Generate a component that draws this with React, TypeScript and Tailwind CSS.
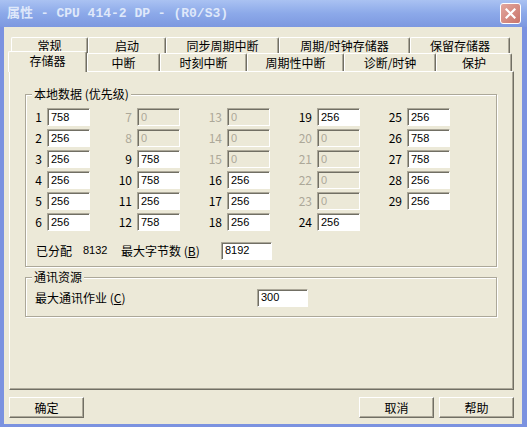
import React from "react";

type Cell = { n: number; v: string; off?: boolean } | null;

const cols: Cell[][] = [
  [{ n: 1, v: "758" }, { n: 2, v: "256" }, { n: 3, v: "256" }, { n: 4, v: "256" }, { n: 5, v: "256" }, { n: 6, v: "256" }],
  [{ n: 7, v: "0", off: true }, { n: 8, v: "0", off: true }, { n: 9, v: "758" }, { n: 10, v: "758" }, { n: 11, v: "256" }, { n: 12, v: "758" }],
  [{ n: 13, v: "0", off: true }, { n: 14, v: "0", off: true }, { n: 15, v: "0", off: true }, { n: 16, v: "256" }, { n: 17, v: "256" }, { n: 18, v: "256" }],
  [{ n: 19, v: "256" }, { n: 20, v: "0", off: true }, { n: 21, v: "0", off: true }, { n: 22, v: "0", off: true }, { n: 23, v: "0", off: true }, { n: 24, v: "256" }],
  [{ n: 25, v: "256" }, { n: 26, v: "758" }, { n: 27, v: "758" }, { n: 28, v: "256" }, { n: 29, v: "256" }, null],
];

const cjk = "font-['Noto_Sans_CJK_SC',sans-serif]";
const sunken =
  "border border-t-[#aca899] border-l-[#aca899] border-b-white border-r-white shadow-[inset_1px_1px_0_#716f64]";
const raised =
  "border border-t-white border-l-white border-r-[#716f64] border-b-[#716f64] shadow-[inset_-1px_-1px_0_#aca899]";
const etched = "border border-[#aca899] shadow-[inset_1px_1px_0_#fff,1px_1px_0_#fff]";

const Field = ({ value, off, w = "w-[43px]" }: { value: string; off?: boolean; w?: string }) => (
  <div
    className={`${w} h-[18px] ${sunken} ${off ? "bg-[#ece9d8] text-[#aca899]" : "bg-white text-black"} pl-[3px] flex items-center font-['Liberation_Sans',sans-serif] text-[11px]`}
  >
    {value}
  </div>
);

const Tab = ({ label, w, active }: { label: string; w: string; active?: boolean }) => (
  <div
    className={`${w} ${active ? "h-[21px] -mb-[1px] relative z-10 pb-[3px]" : "h-full"} bg-[#ece9d8] border-t border-l border-r border-t-white border-l-white border-r-[#716f64] shadow-[inset_-1px_0_0_#aca899] rounded-t-[2px] flex items-center justify-center text-[12px] leading-none`}
  >
    {label}
  </div>
);

export default function App() {
  return (
    <div className={`w-[527px] h-[427px] flex flex-col bg-[#7b92e0] ${cjk} text-black`}>
      <div className="h-[27px] shrink-0 flex items-center justify-between pl-[7px] pr-[6px] bg-gradient-to-b from-[#aac2f2] via-[#8ca9e9] to-[#7d98e0]">
        <span className="font-['Liberation_Mono','Noto_Sans_CJK_SC',monospace] font-bold text-[13px] text-[#dfe8fa] whitespace-pre">
          属性 - CPU 414-2 DP - (R0/S3)
        </span>
        <div className="w-[21px] h-[21px] rounded-[3px] border border-white bg-gradient-to-br from-[#e2a79e] to-[#c9746a] flex items-center justify-center">
          <svg width="11" height="11" viewBox="0 0 11 11">
            <path d="M1.5 1.5L9.5 9.5M9.5 1.5L1.5 9.5" stroke="white" strokeWidth="2.2" strokeLinecap="square" />
          </svg>
        </div>
      </div>

      <div className="flex-1 ml-[4px] mr-[5px] mb-[3px] bg-[#ece9d8] pl-[5px] pt-[10px]">
        <div className="w-[505px]">
          <div className="h-[16px] flex pl-[2px]">
            <Tab label="常规" w="w-[77px]" />
            <Tab label="启动" w="w-[78px]" />
            <Tab label="同步周期中断" w="w-[113px]" />
            <Tab label="周期/时钟存储器" w="w-[131px]" />
            <Tab label="保留存储器" w="w-[100px]" />
          </div>
          <div className="h-[18px] flex items-end -ml-[1px]">
            <Tab label="存储器" w="w-[79px]" active />
            <Tab label="中断" w="w-[73px]" />
            <Tab label="时刻中断" w="w-[87px]" />
            <Tab label="周期性中断" w="w-[97px]" />
            <Tab label="诊断/时钟" w="w-[92px]" />
            <Tab label="保护" w="w-[76px]" />
          </div>

          <div className={`h-[319px] ${raised} pt-[22px] pl-[15px] text-[12px]`}>
            <div className={`relative w-[472px] h-[173px] ${etched} pt-[13px] pl-[1px]`}>
              <span className="absolute left-[6px] -top-[8px] px-[2px] bg-[#ece9d8] leading-[14px]">本地数据 (优先级)</span>
              <div className="grid grid-cols-[repeat(5,63px)] gap-x-[27px]">
                {cols.map((col, ci) => (
                  <div key={ci} className="flex flex-col gap-y-[3px]">
                    {col.map((c, ri) =>
                      c ? (
                        <div key={ri} className="flex items-center h-[18px]">
                          <span className={`w-[20px] pr-[5px] text-right ${c.off ? "text-[#aca899]" : ""}`}>{c.n}</span>
                          <Field value={c.v} off={c.off} />
                        </div>
                      ) : (
                        <div key={ri} className="h-[18px]" />
                      )
                    )}
                  </div>
                ))}
              </div>
              <div className="mt-[11px] h-[17px] flex items-center pl-[9px]">
                <span className="w-[47px]">已分配</span>
                <span className="w-[38px] font-['Liberation_Sans',sans-serif] text-[11px]">8132</span>
                <span className="w-[100px]">
                  最大字节数 (<u>B</u>)
                </span>
                <Field value="8192" w="w-[51px]" />
              </div>
            </div>

            <div className={`relative mt-[10px] w-[472px] h-[40px] ${etched} pt-[11px] pl-[9px]`}>
              <span className="absolute left-[6px] -top-[8px] px-[2px] bg-[#ece9d8] leading-[14px]">通讯资源</span>
              <div className="flex items-center h-[17px]">
                <span className="w-[222px]">
                  最大通讯作业 (<u>C</u>)
                </span>
                <Field value="300" w="w-[51px]" />
              </div>
            </div>
          </div>

          <div className="mt-[7px] flex text-[12px]">
            <button className={`w-[75px] h-[21px] ${raised} bg-[#ece9d8]`}>确定</button>
            <div className="ml-auto flex gap-[5px]">
              <button className={`w-[75px] h-[21px] ${raised} bg-[#ece9d8]`}>取消</button>
              <button className={`w-[75px] h-[21px] ${raised} bg-[#ece9d8]`}>帮助</button>
            </div>
          </div>
        </div>
      </div>
    </div>
  );
}
